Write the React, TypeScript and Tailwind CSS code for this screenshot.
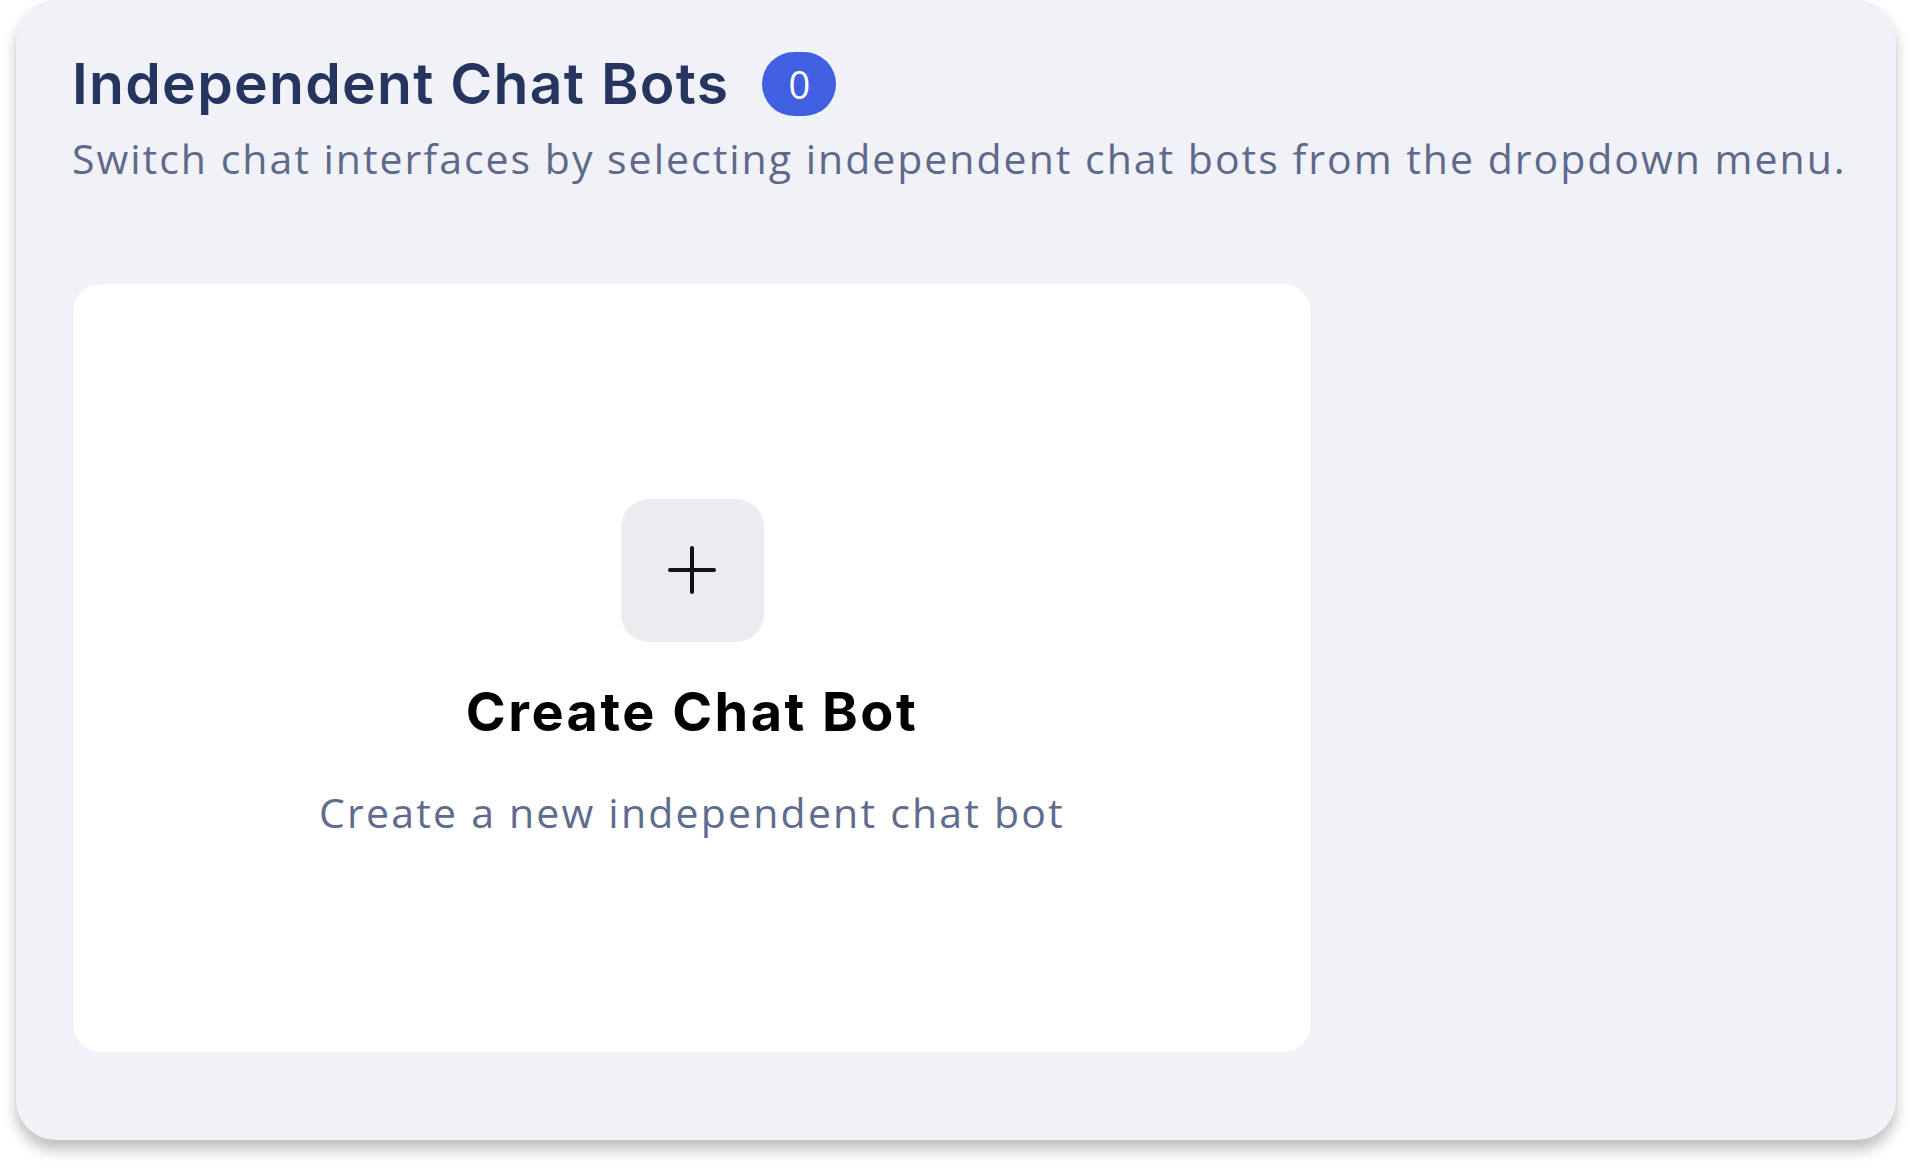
import React from 'react';

/**
 * Independent chat bots panel
 */

const headingFont = { fontFamily: 'Inter, "Noto Sans", sans-serif' };

const CreateChatBotCard: React.FC<{ onCreate?: () => void }> = ({ onCreate }) => {
  return (
    <button
      type="button"
      onClick={onCreate}
      className="flex h-[770px] w-[1240px] flex-col items-center justify-center rounded-[28px] border border-[#eceef4] bg-white"
    >
      <span className="flex h-[143px] w-[143px] items-center justify-center rounded-[28px] bg-[#ebecf0]">
        <svg width="48" height="48" viewBox="0 0 48 48" fill="none" stroke="#111111" strokeWidth={4} strokeLinecap="round">
          <path d="M24 2v44M2 24h44" />
        </svg>
      </span>
      <span className="mt-[38px] text-[54px] font-bold leading-[64px] tracking-[2.5px] text-black">
        Create Chat Bot
      </span>
      <span className="mt-[42px] font-['Open_Sans',sans-serif] text-[41px] leading-[52px] tracking-[2.2px] text-[#5e6c8d]">
        Create a new independent chat bot
      </span>
    </button>
  );
};

export default function App() {
  return (
    <div className="min-h-screen bg-white" style={headingFont}>
      <section className="ml-4 flex h-[1140px] w-[1880px] flex-col rounded-[40px] bg-[#f1f2f7] pl-[56px] pt-[52px] shadow-[0_10px_14px_rgba(0,0,0,0.25)]">
        <div className="flex items-center gap-[33px]">
          <h1 className="text-[57px] font-semibold leading-[64px] tracking-[1.3px] text-[#26355f]">
            Independent Chat Bots
          </h1>
          <span className="flex h-[64px] w-[74px] items-center justify-center rounded-full bg-[#4060e1] font-['Open_Sans',sans-serif] text-[38px] text-white">
            0
          </span>
        </div>
        <p className="mt-[16px] font-['Open_Sans',sans-serif] text-[41px] leading-[52px] tracking-[2px] text-[#5d6a8b]">
          Switch chat interfaces by selecting independent chat bots from the dropdown menu.
        </p>
        <div className="mt-[99px]">
          <CreateChatBotCard />
        </div>
      </section>
    </div>
  );
}
